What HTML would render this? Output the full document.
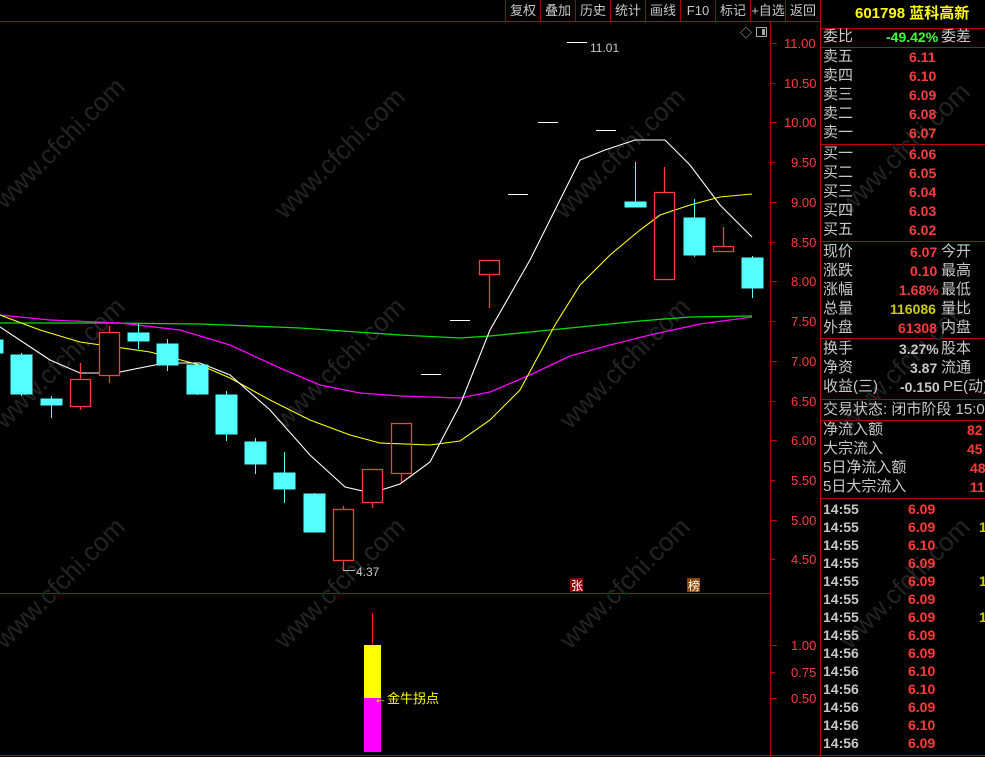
<!DOCTYPE html>
<html><head><meta charset="utf-8"><style>
*{margin:0;padding:0}
body{width:985px;height:757px;background:#000;overflow:hidden;position:relative;font-family:"Liberation Sans","Noto Sans CJK SC",sans-serif}
.t{position:absolute;white-space:nowrap;font-size:15px;line-height:18px;color:#c8c8c8}
.r{color:#ff3c3c}
.b{font-weight:bold}
.btn{position:absolute;top:0;height:21px;font-size:13px;line-height:22px;color:#c8c8c8;text-align:center;border-left:1px solid #a00}
.ax{position:absolute;font-size:13px;color:#ff3c3c;line-height:14px}
</style></head><body>
<svg width="985" height="757" style="position:absolute;left:0;top:0">
<g fill="none" stroke="#c00000" stroke-width="1">
<line x1="0" y1="21.5" x2="820" y2="21.5"/>
<line x1="770.5" y1="21" x2="770.5" y2="757"/>
<line x1="820.5" y1="0" x2="820.5" y2="757"/>
<line x1="0" y1="593.5" x2="770" y2="593.5"/>
<line x1="0" y1="755.5" x2="985" y2="755.5"/>
<line x1="821" y1="28.5" x2="985" y2="28.5"/>
<line x1="821" y1="47.5" x2="985" y2="47.5"/>
<line x1="821" y1="144.5" x2="985" y2="144.5"/>
<line x1="821" y1="241.5" x2="985" y2="241.5"/>
<line x1="821" y1="338.5" x2="985" y2="338.5"/>
<line x1="821" y1="399.5" x2="985" y2="399.5"/>
<line x1="821" y1="420.5" x2="985" y2="420.5"/>
<line x1="821" y1="498.5" x2="985" y2="498.5"/>
</g>
<g stroke="#c00000">
<line x1="771" y1="43.5" x2="777" y2="43.5"/><line x1="771" y1="83.5" x2="775" y2="83.5"/>
<line x1="771" y1="122.5" x2="777" y2="122.5"/><line x1="771" y1="162.5" x2="775" y2="162.5"/>
<line x1="771" y1="202.5" x2="777" y2="202.5"/><line x1="771" y1="242.5" x2="775" y2="242.5"/>
<line x1="771" y1="281.5" x2="777" y2="281.5"/><line x1="771" y1="321.5" x2="775" y2="321.5"/>
<line x1="771" y1="361.5" x2="777" y2="361.5"/><line x1="771" y1="401.5" x2="775" y2="401.5"/>
<line x1="771" y1="440.5" x2="777" y2="440.5"/><line x1="771" y1="480.5" x2="775" y2="480.5"/>
<line x1="771" y1="520.5" x2="777" y2="520.5"/><line x1="771" y1="559.5" x2="775" y2="559.5"/>
<line x1="771" y1="645.5" x2="777" y2="645.5"/><line x1="771" y1="672.5" x2="775" y2="672.5"/><line x1="771" y1="698.5" x2="777" y2="698.5"/>
</g>
<g fill="#232323" font-size="26" font-family="Liberation Sans,sans-serif">
<text transform="translate(5,210) rotate(-45)">www.cfchi.com</text>
<text transform="translate(285,220) rotate(-45)">www.cfchi.com</text>
<text transform="translate(565,220) rotate(-45)">www.cfchi.com</text>
<text transform="translate(850,215) rotate(-45)">www.cfchi.com</text>
<text transform="translate(5,430) rotate(-45)">www.cfchi.com</text>
<text transform="translate(285,430) rotate(-45)">www.cfchi.com</text>
<text transform="translate(570,430) rotate(-45)">www.cfchi.com</text>
<text transform="translate(850,430) rotate(-45)">www.cfchi.com</text>
<text transform="translate(5,650) rotate(-45)">www.cfchi.com</text>
<text transform="translate(285,650) rotate(-45)">www.cfchi.com</text>
<text transform="translate(570,650) rotate(-45)">www.cfchi.com</text>
<text transform="translate(850,650) rotate(-45)">www.cfchi.com</text>
</g>
<polyline fill="none" stroke="#00e000" stroke-width="1.3" points="0,323 100,323 200,324 300,328 400,335 460,338 490,336 530,332 580,327 640,321 690,317 752,316"/>
<polyline fill="none" stroke="#ff00ff" stroke-width="1.3" points="0,315 50,320 120,323 180,330 230,345 280,368 320,385 360,393 400,396 460,398 490,392 530,375 570,356 610,345 650,335 700,324 752,317"/>
<polyline fill="none" stroke="#ffff00" stroke-width="1.1" points="0,315 40,330 80,342 150,352 200,365 230,378 270,400 310,420 350,435 380,443 430,445 460,441 490,420 520,390 555,325 580,285 610,255 640,230 660,215 690,205 720,197 752,194"/>
<polyline fill="none" stroke="#ffffff" stroke-width="1.1" points="0,327 50,360 80,373 115,373 165,363 200,363 230,375 270,410 310,455 345,487 372,493 400,484 430,462 460,405 490,330 530,260 560,200 580,160 605,150 635,140 665,140 690,165 720,205 752,237"/>
<g fill="#54ffff" stroke="#54ffff">
<rect x="-5" y="340" width="8" height="13"/>
<line x1="21.5" y1="353" x2="21.5" y2="396"/><rect x="11" y="355" width="21" height="39"/>
<line x1="51.5" y1="396" x2="51.5" y2="418"/><rect x="41" y="399" width="21" height="6"/>
<line x1="138.5" y1="324" x2="138.5" y2="349"/><rect x="128" y="333" width="21" height="8"/>
<line x1="167.5" y1="339" x2="167.5" y2="371"/><rect x="157" y="344" width="21" height="21"/>
<line x1="197.5" y1="365" x2="197.5" y2="395"/><rect x="187" y="365" width="21" height="29"/>
<line x1="226.5" y1="391" x2="226.5" y2="441"/><rect x="216" y="395" width="21" height="39"/>
<line x1="255.5" y1="438" x2="255.5" y2="474"/><rect x="245" y="442" width="21" height="22"/>
<line x1="284.5" y1="452" x2="284.5" y2="503"/><rect x="274" y="473" width="21" height="16"/>
<line x1="314.5" y1="493" x2="314.5" y2="532"/><rect x="304" y="494" width="21" height="38"/>
<line x1="635.5" y1="162" x2="635.5" y2="207"/><rect x="625" y="202" width="21" height="5"/>
<line x1="694.5" y1="199" x2="694.5" y2="257"/><rect x="684" y="218" width="21" height="37"/>
<line x1="752.5" y1="256" x2="752.5" y2="298"/><rect x="742" y="258" width="21" height="30"/>
</g>
<g fill="none" stroke="#ff3c3c" stroke-width="1.3">
<line x1="80.5" y1="363" x2="80.5" y2="410"/><rect x="70.5" y="379.5" width="20" height="27" fill="#000"/>
<line x1="109.5" y1="326" x2="109.5" y2="383"/><rect x="99.5" y="332.5" width="20" height="43" fill="#000"/>
<line x1="343.5" y1="506" x2="343.5" y2="570"/><rect x="333.5" y="509.5" width="20" height="51" fill="#000"/>
<line x1="372.5" y1="469" x2="372.5" y2="508"/><rect x="362.5" y="469.5" width="20" height="33" fill="#000"/>
<line x1="401.5" y1="473" x2="401.5" y2="482"/><rect x="391.5" y="423.5" width="20" height="50" fill="none"/>
<line x1="489.5" y1="274" x2="489.5" y2="308"/><rect x="479.5" y="260.5" width="20" height="14"/>
<line x1="664.5" y1="167" x2="664.5" y2="192"/><rect x="654.5" y="192.5" width="20" height="87"/>
<line x1="723.5" y1="227" x2="723.5" y2="246"/><rect x="713.5" y="246.5" width="20" height="5"/>
</g>
<g stroke="#fff">
<line x1="421" y1="374.5" x2="441" y2="374.5"/><line x1="450" y1="320.5" x2="470" y2="320.5"/>
<line x1="508" y1="194.5" x2="528" y2="194.5"/><line x1="538" y1="122.5" x2="558" y2="122.5"/>
<line x1="567" y1="42.5" x2="587" y2="42.5"/><line x1="596" y1="130.5" x2="616" y2="130.5"/>
<line x1="343" y1="570.5" x2="355" y2="570.5" stroke="#bbb"/>
</g>
<text x="590" y="52" fill="#c8c8c8" font-size="12" font-family="Liberation Sans,sans-serif">11.01</text>
<text x="356" y="576" fill="#c8c8c8" font-size="12" font-family="Liberation Sans,sans-serif">4.37</text>
<text x="740" y="37" fill="#aaa" font-size="12">◇</text>
<rect x="756.5" y="27.5" width="10" height="9" fill="none" stroke="#aaa"/><rect x="762" y="29" width="3" height="6" fill="#aaa"/>
<line x1="372.5" y1="613" x2="372.5" y2="645" stroke="#ff2020"/>
<rect x="364" y="645" width="17" height="53" fill="#ffff00"/>
<rect x="364" y="698" width="17" height="54" fill="#ff00ff"/>
<rect x="570" y="578" width="13" height="14" fill="#8b0000"/>
<rect x="687" y="578" width="13" height="14" fill="#8b4500"/>
</svg>
<div class="t" style="left:571px;top:577px;font-size:12px;color:#fff">张</div>
<div class="t" style="left:688px;top:577px;font-size:12px;color:#fff">榜</div>
<div class="t" style="left:374px;top:690px;font-size:13px;color:#ffff00">←金牛拐点</div>

<div class="btn" style="left:505px;width:34px">复权</div>
<div class="btn" style="left:540px;width:34px">叠加</div>
<div class="btn" style="left:575px;width:34px">历史</div>
<div class="btn" style="left:610px;width:34px">统计</div>
<div class="btn" style="left:645px;width:34px">画线</div>
<div class="btn" style="left:680px;width:34px">F10</div>
<div class="btn" style="left:715px;width:34px">标记</div>
<div class="btn" style="left:750px;width:34px">+自选</div>
<div class="btn" style="left:785px;width:34px">返回</div>

<div class="ax" style="left:784px;top:37px">11.00</div>
<div class="ax" style="left:784px;top:77px">10.50</div>
<div class="ax" style="left:784px;top:116px">10.00</div>
<div class="ax" style="left:791px;top:156px">9.50</div>
<div class="ax" style="left:791px;top:196px">9.00</div>
<div class="ax" style="left:791px;top:236px">8.50</div>
<div class="ax" style="left:791px;top:275px">8.00</div>
<div class="ax" style="left:791px;top:315px">7.50</div>
<div class="ax" style="left:791px;top:355px">7.00</div>
<div class="ax" style="left:791px;top:395px">6.50</div>
<div class="ax" style="left:791px;top:434px">6.00</div>
<div class="ax" style="left:791px;top:474px">5.50</div>
<div class="ax" style="left:791px;top:514px">5.00</div>
<div class="ax" style="left:791px;top:553px">4.50</div>
<div class="ax" style="left:791px;top:639px">1.00</div>
<div class="ax" style="left:791px;top:666px">0.75</div>
<div class="ax" style="left:791px;top:692px">0.50</div>

<div class="t b" style="left:855px;top:5px;color:#ffff00;font-size:15px">601798 蓝科高新</div>
<div class="t" style="left:823px;top:28px">委比</div><div class="t b" style="left:886px;top:28px;color:#3cff3c;font-size:14px">-49.42%</div><div class="t" style="left:941px;top:28px">委差</div>

<div class="t" style="left:823px;top:48px">卖五</div><div class="t b r" style="left:909px;top:48px;font-size:14px">6.11</div>
<div class="t" style="left:823px;top:67px">卖四</div><div class="t b r" style="left:909px;top:67px;font-size:14px">6.10</div>
<div class="t" style="left:823px;top:86px">卖三</div><div class="t b r" style="left:909px;top:86px;font-size:14px">6.09</div>
<div class="t" style="left:823px;top:105px">卖二</div><div class="t b r" style="left:909px;top:105px;font-size:14px">6.08</div>
<div class="t" style="left:823px;top:124px">卖一</div><div class="t b r" style="left:909px;top:124px;font-size:14px">6.07</div>

<div class="t" style="left:823px;top:145px">买一</div><div class="t b r" style="left:909px;top:145px;font-size:14px">6.06</div>
<div class="t" style="left:823px;top:164px">买二</div><div class="t b r" style="left:909px;top:164px;font-size:14px">6.05</div>
<div class="t" style="left:823px;top:183px">买三</div><div class="t b r" style="left:909px;top:183px;font-size:14px">6.04</div>
<div class="t" style="left:823px;top:202px">买四</div><div class="t b r" style="left:909px;top:202px;font-size:14px">6.03</div>
<div class="t" style="left:823px;top:221px">买五</div><div class="t b r" style="left:909px;top:221px;font-size:14px">6.02</div>

<div class="t" style="left:823px;top:243px">现价</div><div class="t b r" style="left:910px;top:243px;font-size:14px">6.07</div><div class="t" style="left:941px;top:243px">今开</div>
<div class="t" style="left:823px;top:262px">涨跌</div><div class="t b r" style="left:910px;top:262px;font-size:14px">0.10</div><div class="t" style="left:941px;top:262px">最高</div>
<div class="t" style="left:823px;top:281px">涨幅</div><div class="t b r" style="left:899px;top:281px;font-size:14px">1.68%</div><div class="t" style="left:941px;top:281px">最低</div>
<div class="t" style="left:823px;top:300px">总量</div><div class="t b" style="left:890px;top:300px;font-size:14px;color:#cccc00">116086</div><div class="t" style="left:941px;top:300px">量比</div>
<div class="t" style="left:823px;top:319px">外盘</div><div class="t b r" style="left:898px;top:319px;font-size:14px">61308</div><div class="t" style="left:941px;top:319px">内盘</div>

<div class="t" style="left:823px;top:340px">换手</div><div class="t b" style="left:899px;top:340px;font-size:14px">3.27%</div><div class="t" style="left:941px;top:340px">股本</div>
<div class="t" style="left:823px;top:359px">净资</div><div class="t b" style="left:910px;top:359px;font-size:14px">3.87</div><div class="t" style="left:941px;top:359px">流通</div>
<div class="t" style="left:823px;top:378px">收益(三)</div><div class="t b" style="left:900px;top:378px;font-size:14px">-0.150</div><div class="t" style="left:943px;top:378px">PE(动)</div>

<div class="t" style="left:823px;top:401px">交易状态: 闭市阶段 15:0</div>

<div class="t" style="left:823px;top:421px">净流入额</div><div class="t b r" style="left:967px;top:421px;font-size:14px">82</div>
<div class="t" style="left:823px;top:440px">大宗流入</div><div class="t b r" style="left:967px;top:440px;font-size:14px">45</div>
<div class="t" style="left:823px;top:459px">5日净流入额</div><div class="t b r" style="left:970px;top:459px;font-size:14px">48</div>
<div class="t" style="left:823px;top:478px">5日大宗流入</div><div class="t b r" style="left:970px;top:478px;font-size:14px">11</div>

<div style="position:absolute;left:823px;top:500px;font-size:14px;line-height:18px;font-weight:bold;color:#c8c8c8;font-family:'Liberation Sans',sans-serif">
14:55<br>14:55<br>14:55<br>14:55<br>14:55<br>14:55<br>14:55<br>14:55<br>14:56<br>14:56<br>14:56<br>14:56<br>14:56<br>14:56</div>
<div style="position:absolute;left:908px;top:500px;font-size:14px;line-height:18px;font-weight:bold;color:#ff3c3c;font-family:'Liberation Sans',sans-serif">
6.09<br>6.09<br>6.10<br>6.09<br>6.09<br>6.09<br>6.09<br>6.09<br>6.09<br>6.10<br>6.10<br>6.09<br>6.10<br>6.09</div>
<div style="position:absolute;left:979px;top:500px;font-size:14px;line-height:18px;font-weight:bold;color:#cccc00;font-family:'Liberation Sans',sans-serif">
&nbsp;<br>1<br>&nbsp;<br>&nbsp;<br>1<br>&nbsp;<br>1</div>
</body></html>
